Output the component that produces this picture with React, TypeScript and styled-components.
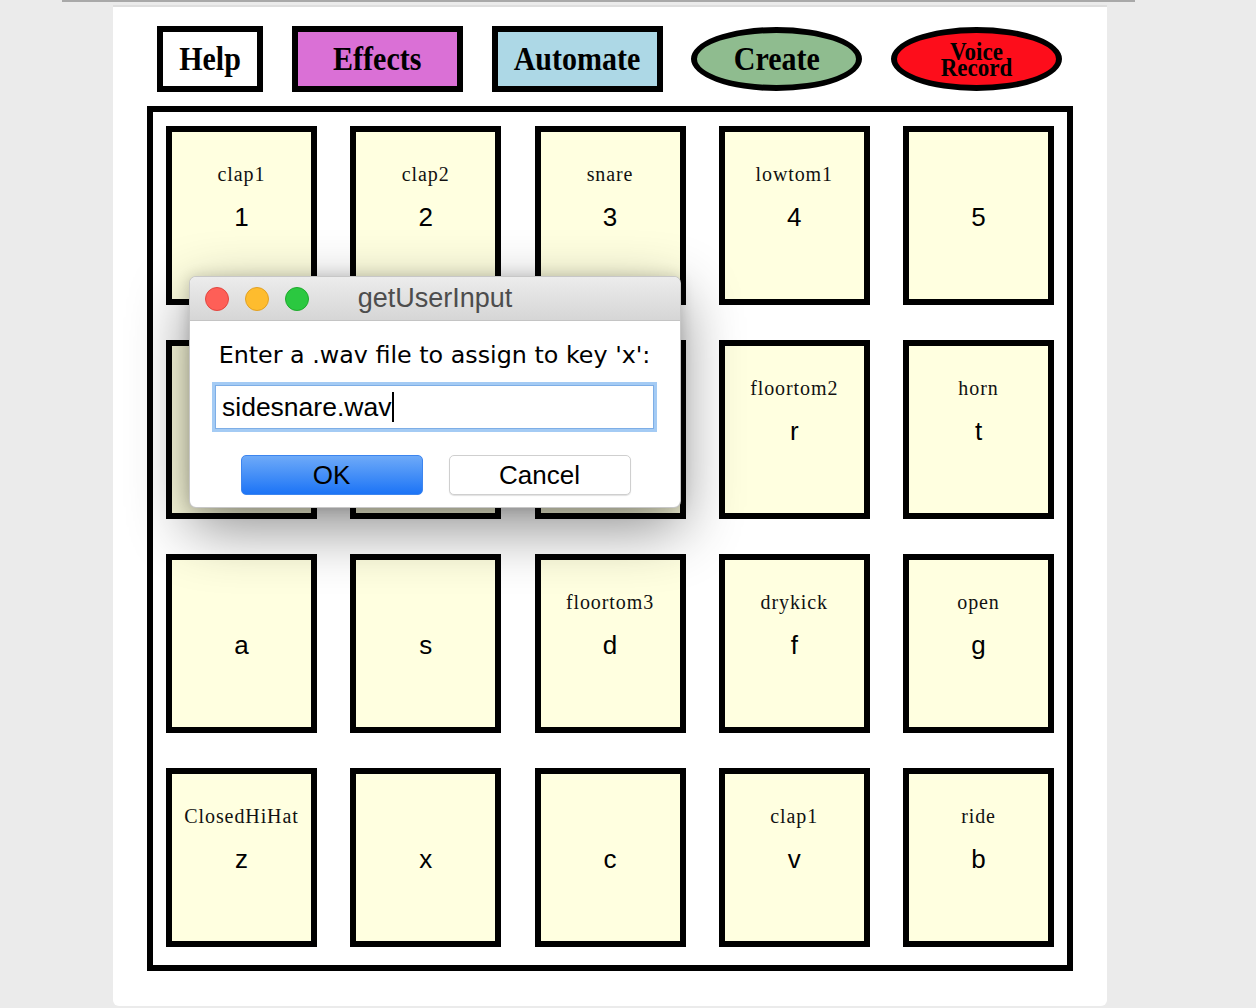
import React from "react";
import styled, {createGlobalStyle} from "styled-components";

const GlobalStyle = createGlobalStyle`
    html, body {
        margin: 0;
        padding: 0;
        background: #ebebeb;
    }
    #root {
        position: relative;
        min-height: 1008px;
    }
`;

const TopRule = styled.div`
    margin-left: 62px;
    width: 1073px;
    height: 2px;
    background: #a9a9a9;
`;

const Panel = styled.div`
    box-sizing: border-box;
    margin: 3px 0 0 113px;
    width: 994px;
    height: 1001px;
    background: #ffffff;
    border-top: 2px solid #dedede;
    border-radius: 0 0 6px 6px;
    padding: 19px 0 0 34px;
`;

const ButtonRow = styled.div`
    display: flex;
    align-items: center;
    gap: 28.75px;
    margin: 0 0 14px 10px;
    height: 66px;
`;

const ToolButton = styled.div<{ $bg: string; $round?: boolean; $w: number }>`
    box-sizing: border-box;
    width: ${({$w}) => $w}px;
    height: ${({$round}) => ($round ? 64 : 66)}px;
    display: flex;
    align-items: center;
    justify-content: center;
    background: ${({$bg}) => $bg};
    border: 6px solid #000;
    border-radius: ${({$round}) => ($round ? "50%" : "0")};
    font-family: "Liberation Serif", "Times New Roman", serif;
    font-weight: bold;
    font-size: 30px;
    color: #000;
`;

const ButtonText = styled.span`
    display: inline-block;
    transform: scaleY(1.12);
`;

const StackedText = styled.span`
    display: flex;
    flex-direction: column;
    align-items: center;
    font-size: 23px;
    line-height: 14.5px;
    margin-top: 2px;
    transform: scaleY(1.1);
`;

const Board = styled.div`
    box-sizing: border-box;
    width: 926px;
    height: 865px;
    border: 6px solid #000;
    padding: 14px 13px 18px 13px;
    display: grid;
    grid-template-columns: repeat(5, 151px);
    grid-auto-rows: 179px;
    row-gap: 35px;
    justify-content: space-between;
`;

const Pad = styled.div`
    box-sizing: border-box;
    border: 6px solid #000;
    background: #ffffe0;
    display: flex;
    flex-direction: column;
    align-items: center;
    padding-top: 30px;
`;

const PadLabel = styled.div`
    height: 24px;
    line-height: 24px;
    margin-bottom: 16px;
    font-family: "Liberation Serif", "Times New Roman", serif;
    font-size: 20px;
    letter-spacing: 0.9px;
    color: #111;
`;

const PadKey = styled.div`
    line-height: 30px;
    font-family: "Liberation Sans", Arial, sans-serif;
    font-size: 26px;
    color: #000;
`;

const Dialog = styled.div`
    position: absolute;
    left: 189px;
    top: 276px;
    width: 492px;
    height: 232px;
    box-sizing: border-box;
    background: #fff;
    border: 1px solid rgba(0, 0, 0, 0.22);
    border-radius: 7px;
    overflow: hidden;
    box-shadow: 0 20px 60px rgba(0, 0, 0, 0.45), 0 0 14px rgba(0, 0, 0, 0.16);
    display: flex;
    flex-direction: column;
`;

const TitleBar = styled.div`
    position: relative;
    height: 43px;
    flex: none;
    display: flex;
    align-items: center;
    gap: 16px;
    padding-left: 15px;
    background: linear-gradient(#ececec, #d6d6d6);
    border-bottom: 1px solid #c4c4c4;
`;

const Light = styled.span<{ $fill: string; $edge: string }>`
    width: 24px;
    height: 24px;
    box-sizing: border-box;
    border-radius: 50%;
    background: ${({$fill}) => $fill};
    border: 1px solid ${({$edge}) => $edge};
`;

const Title = styled.div`
    position: absolute;
    left: 0;
    right: 0;
    top: 0;
    bottom: 0;
    display: flex;
    align-items: center;
    justify-content: center;
    font-family: "Liberation Sans", Arial, sans-serif;
    font-size: 27px;
    color: #4d4d4d;
    pointer-events: none;
`;

const DialogBody = styled.div`
    display: flex;
    flex-direction: column;
    align-items: center;
    padding: 19px 23px 0 22px;
`;

const Prompt = styled.div`
    font-family: "DejaVu Sans", "Lucida Grande", sans-serif;
    font-size: 23.8px;
    line-height: 30px;
    color: #000;
`;

const Field = styled.div`
    box-sizing: border-box;
    align-self: stretch;
    height: 50px;
    margin-top: 12px;
    border: 3px solid #a4cbf4;
    outline: 1px solid #7eaee6;
    outline-offset: -4px;
    display: flex;
    align-items: center;
    padding-left: 7px;
    font-family: "Liberation Sans", Arial, sans-serif;
    font-size: 26.5px;
    color: #000;
`;

const Caret = styled.span`
    display: inline-block;
    width: 2px;
    height: 30px;
    background: #000;
    margin-left: 1px;
`;

const ActionRow = styled.div`
    display: flex;
    gap: 26px;
    margin-top: 23px;
    margin-left: 2px;
`;

const ActionButton = styled.div<{ $primary?: boolean }>`
    box-sizing: border-box;
    width: 182px;
    height: 40px;
    border-radius: 5px;
    display: flex;
    align-items: center;
    justify-content: center;
    font-family: "Liberation Sans", Arial, sans-serif;
    font-size: 26px;
    color: #000;
    background: ${({$primary}) =>
            $primary ? "linear-gradient(#6eaaf8, #1c74f6)" : "#ffffff"};
    border: 1px solid ${({$primary}) => ($primary ? "#3d85ee" : "#cfcfcf")};
    box-shadow: ${({$primary}) =>
            $primary ? "none" : "0 1px 1px rgba(0,0,0,0.12)"};
`;

const pads: [string, string][] = [
    ["clap1", "1"], ["clap2", "2"], ["snare", "3"], ["lowtom1", "4"], ["", "5"],
    ["", "q"], ["", "w"], ["", "e"], ["floortom2", "r"], ["horn", "t"],
    ["", "a"], ["", "s"], ["floortom3", "d"], ["drykick", "f"], ["open", "g"],
    ["ClosedHiHat", "z"], ["", "x"], ["", "c"], ["clap1", "v"], ["ride", "b"],
];

export default function App() {
    return (
        <>
            <GlobalStyle/>
            <TopRule/>
            <Panel>
                <ButtonRow>
                    <ToolButton $bg="#ffffff" $w={106}>
                        <ButtonText>Help</ButtonText>
                    </ToolButton>
                    <ToolButton $bg="#da70d6" $w={171}>
                        <ButtonText>Effects</ButtonText>
                    </ToolButton>
                    <ToolButton $bg="#add8e6" $w={171}>
                        <ButtonText>Automate</ButtonText>
                    </ToolButton>
                    <ToolButton $bg="#8fbc8f" $w={171} $round>
                        <ButtonText>Create</ButtonText>
                    </ToolButton>
                    <ToolButton $bg="#fd0d1b" $w={171} $round>
                        <StackedText>
                            <span>Voice</span>
                            <span>Record</span>
                        </StackedText>
                    </ToolButton>
                </ButtonRow>
                <Board>
                    {pads.map(([label, key]) => (
                        <Pad key={key}>
                            <PadLabel>{label}</PadLabel>
                            <PadKey>{key}</PadKey>
                        </Pad>
                    ))}
                </Board>
            </Panel>
            <Dialog>
                <TitleBar>
                    <Light $fill="#fe5f57" $edge="#e2463f"/>
                    <Light $fill="#febc2e" $edge="#e0a023"/>
                    <Light $fill="#2bc840" $edge="#1eaa2c"/>
                    <Title>getUserInput</Title>
                </TitleBar>
                <DialogBody>
                    <Prompt>Enter a .wav file to assign to key 'x':</Prompt>
                    <Field>
                        sidesnare.wav
                        <Caret/>
                    </Field>
                    <ActionRow>
                        <ActionButton $primary>OK</ActionButton>
                        <ActionButton>Cancel</ActionButton>
                    </ActionRow>
                </DialogBody>
            </Dialog>
        </>
    );
}
